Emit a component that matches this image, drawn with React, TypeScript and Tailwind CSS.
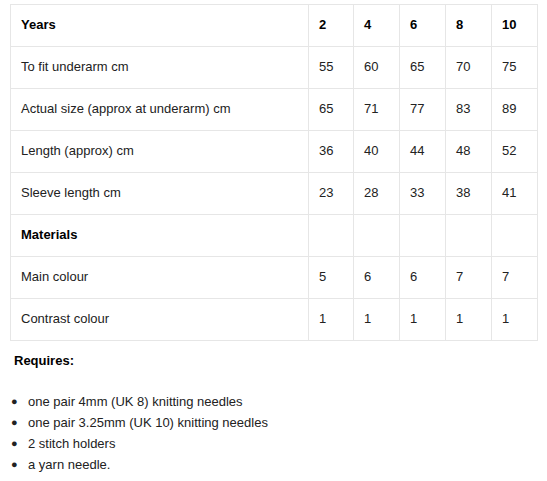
import React from 'react';

const rows: { label: string; values: string[]; bold?: boolean }[] = [
  { label: 'Years', values: ['2', '4', '6', '8', '10'], bold: true },
  { label: 'To fit underarm cm', values: ['55', '60', '65', '70', '75'] },
  { label: 'Actual size (approx at underarm) cm', values: ['65', '71', '77', '83', '89'] },
  { label: 'Length (approx) cm', values: ['36', '40', '44', '48', '52'] },
  { label: 'Sleeve length cm', values: ['23', '28', '33', '38', '41'] },
  { label: 'Materials', values: ['', '', '', '', ''], bold: true },
  { label: 'Main colour', values: ['5', '6', '6', '7', '7'] },
  { label: 'Contrast colour', values: ['1', '1', '1', '1', '1'] },
];

const needs = [
  'one pair 4mm (UK 8) knitting needles',
  'one pair 3.25mm (UK 10) knitting needles',
  '2 stitch holders',
  'a yarn needle.',
];

export default function App() {
  return (
    <div className="w-[547px] h-[481px] bg-white text-[13px] text-[#222] font-['Liberation_Sans',Arial,sans-serif] pt-[4px] pl-[10px]">
      <table className="border-collapse w-[527px] table-fixed">
        <colgroup>
          <col className="w-[298px]" />
          <col className="w-[45px]" />
          <col className="w-[46px]" />
          <col className="w-[46px]" />
          <col className="w-[46px]" />
          <col className="w-[46px]" />
        </colgroup>
        <tbody>
          {rows.map((r) => (
            <tr key={r.label} className="h-[42px]">
              <td className={`border border-[#e6e6e6] px-[10px] pb-[2px] ${r.bold ? 'font-bold text-black' : ''}`}>{r.label}</td>
              {r.values.map((v, i) => (
                <td key={i} className={`border border-[#e6e6e6] px-[10px] pb-[2px] ${r.bold ? 'font-bold text-black' : ''}`}>
                  {v}
                </td>
              ))}
            </tr>
          ))}
        </tbody>
      </table>

      {/* Requires list */}
      <p className="font-bold text-black mt-[11px] ml-[4px] leading-[17px]">Requires:</p>
      <ul className="mt-[22px] leading-[21px]">
        {needs.map((n) => (
          <li key={n} className="flex items-center">
            <span className="w-[18px] pl-[1px] text-[11px]">●</span>
            <span>{n}</span>
          </li>
        ))}
      </ul>
    </div>
  );
}
